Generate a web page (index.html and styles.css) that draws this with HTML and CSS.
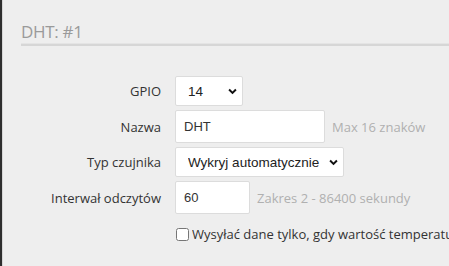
FILE: index.html
```html
<!DOCTYPE html>
<html lang="pl">
<head>
    <meta charset="UTF-8">
    <meta name="viewport" content="width=device-width, initial-scale=1.0">
    <title>DHT #1</title>
    <link rel="stylesheet" href="styles.css">
</head>
<body>
    <div class="edge"></div>

    <div class="panel">
        <h2 class="panel-title">DHT: #1</h2>

        <form class="sensor-form">
            <label class="field-label" for="gpio">GPIO</label>
            <div class="field">
                <div class="select-wrap">
                    <select id="gpio" class="select select-small">
                        <option>14</option>
                    </select>
                    <svg class="chevron" viewBox="0 0 10 7" width="9" height="7"><path d="M1.2 1.3 5 5 8.8 1.3" fill="none" stroke="#111" stroke-width="2.2"/></svg>
                </div>
            </div>

            <label class="field-label" for="name">Nazwa</label>
            <div class="field">
                <input id="name" class="input input-name" type="text" value="DHT">
                <span class="hint">Max 16 znaków</span>
            </div>

            <label class="field-label" for="type">Typ czujnika</label>
            <div class="field">
                <div class="select-wrap">
                    <select id="type" class="select select-wide">
                        <option>Wykryj automatycznie</option>
                    </select>
                    <svg class="chevron" viewBox="0 0 10 7" width="9" height="7"><path d="M1.2 1.3 5 5 8.8 1.3" fill="none" stroke="#111" stroke-width="2.2"/></svg>
                </div>
            </div>

            <label class="field-label" for="interval">Interwał odczytów</label>
            <div class="field">
                <input id="interval" class="input input-interval" type="text" value="60">
                <span class="hint">Zakres 2 - 86400 sekundy</span>
            </div>

            <div></div>
            <label class="check">
                <input type="checkbox" class="check-box">
                <span class="check-text">Wysyłać dane tylko, gdy wartość temperatury się zmieni</span>
            </label>
        </form>
    </div>
</body>
</html>
```

FILE: styles.css
```css
* {
    margin: 0;
    padding: 0;
    box-sizing: border-box;
}

body {
    font-family: 'Open Sans', sans-serif;
    background: #eeeeee;
    color: #333;
    display: flex;
    min-height: 100vh;
    overflow: hidden;
}

.edge {
    width: 3px;
    background: #2e2e2e;
    border-right: 1px solid #d6d6d6;
    flex-shrink: 0;
}

.panel {
    flex: 1;
    min-width: 0;
    padding: 21px 0 0 18px;
    white-space: nowrap;
}

.panel-title {
    font-size: 17px;
    font-weight: 400;
    color: #9a9a9a;
    letter-spacing: -0.3px;
    line-height: 21px;
    padding-bottom: 1px;
    border-bottom: 1px solid #e4e4e4;
    box-shadow: 0 2px 0 #d6d6d6;
}

.sensor-form {
    display: grid;
    grid-template-columns: 140px minmax(0, 1fr);
    column-gap: 14px;
    row-gap: 4px;
    margin-top: 32px;
    align-items: center;
}

.field-label {
    text-align: right;
    font-size: 13px;
    color: #333;
}

.field {
    display: flex;
    align-items: center;
    gap: 7px;
}

.select-wrap {
    position: relative;
}

.select {
    appearance: none;
    -webkit-appearance: none;
    font-family: 'Liberation Sans', Arial, sans-serif;
    font-size: 13.5px;
    color: #222;
    background: #fff;
    border: 1px solid #dcdcdc;
    border-radius: 2px;
    height: 30px;
    padding: 0 22px 0 12px;
    display: block;
}

.select-small {
    width: 68px;
}

.select-wide {
    width: 169px;
}

.chevron {
    position: absolute;
    right: 6px;
    top: 12px;
    pointer-events: none;
}

.input {
    font-family: 'Liberation Sans', Arial, sans-serif;
    font-size: 13px;
    color: #333;
    background: #fff;
    border: 1px solid #dcdcdc;
    border-radius: 2px;
    height: 33px;
    padding: 0 8px;
}

.input-name {
    width: 150px;
}

.input-interval {
    width: 75px;
}

.hint {
    font-size: 13px;
    color: #b0b0b0;
}

.check {
    display: flex;
    align-items: center;
    gap: 3px;
    font-size: 13px;
    color: #333;
    margin-top: 7px;
    overflow: hidden;
}

.check-box {
    width: 13px;
    height: 13px;
    margin: 0 0 0 1px;
    flex-shrink: 0;
}

.check-text {
    overflow: hidden;
}
```
